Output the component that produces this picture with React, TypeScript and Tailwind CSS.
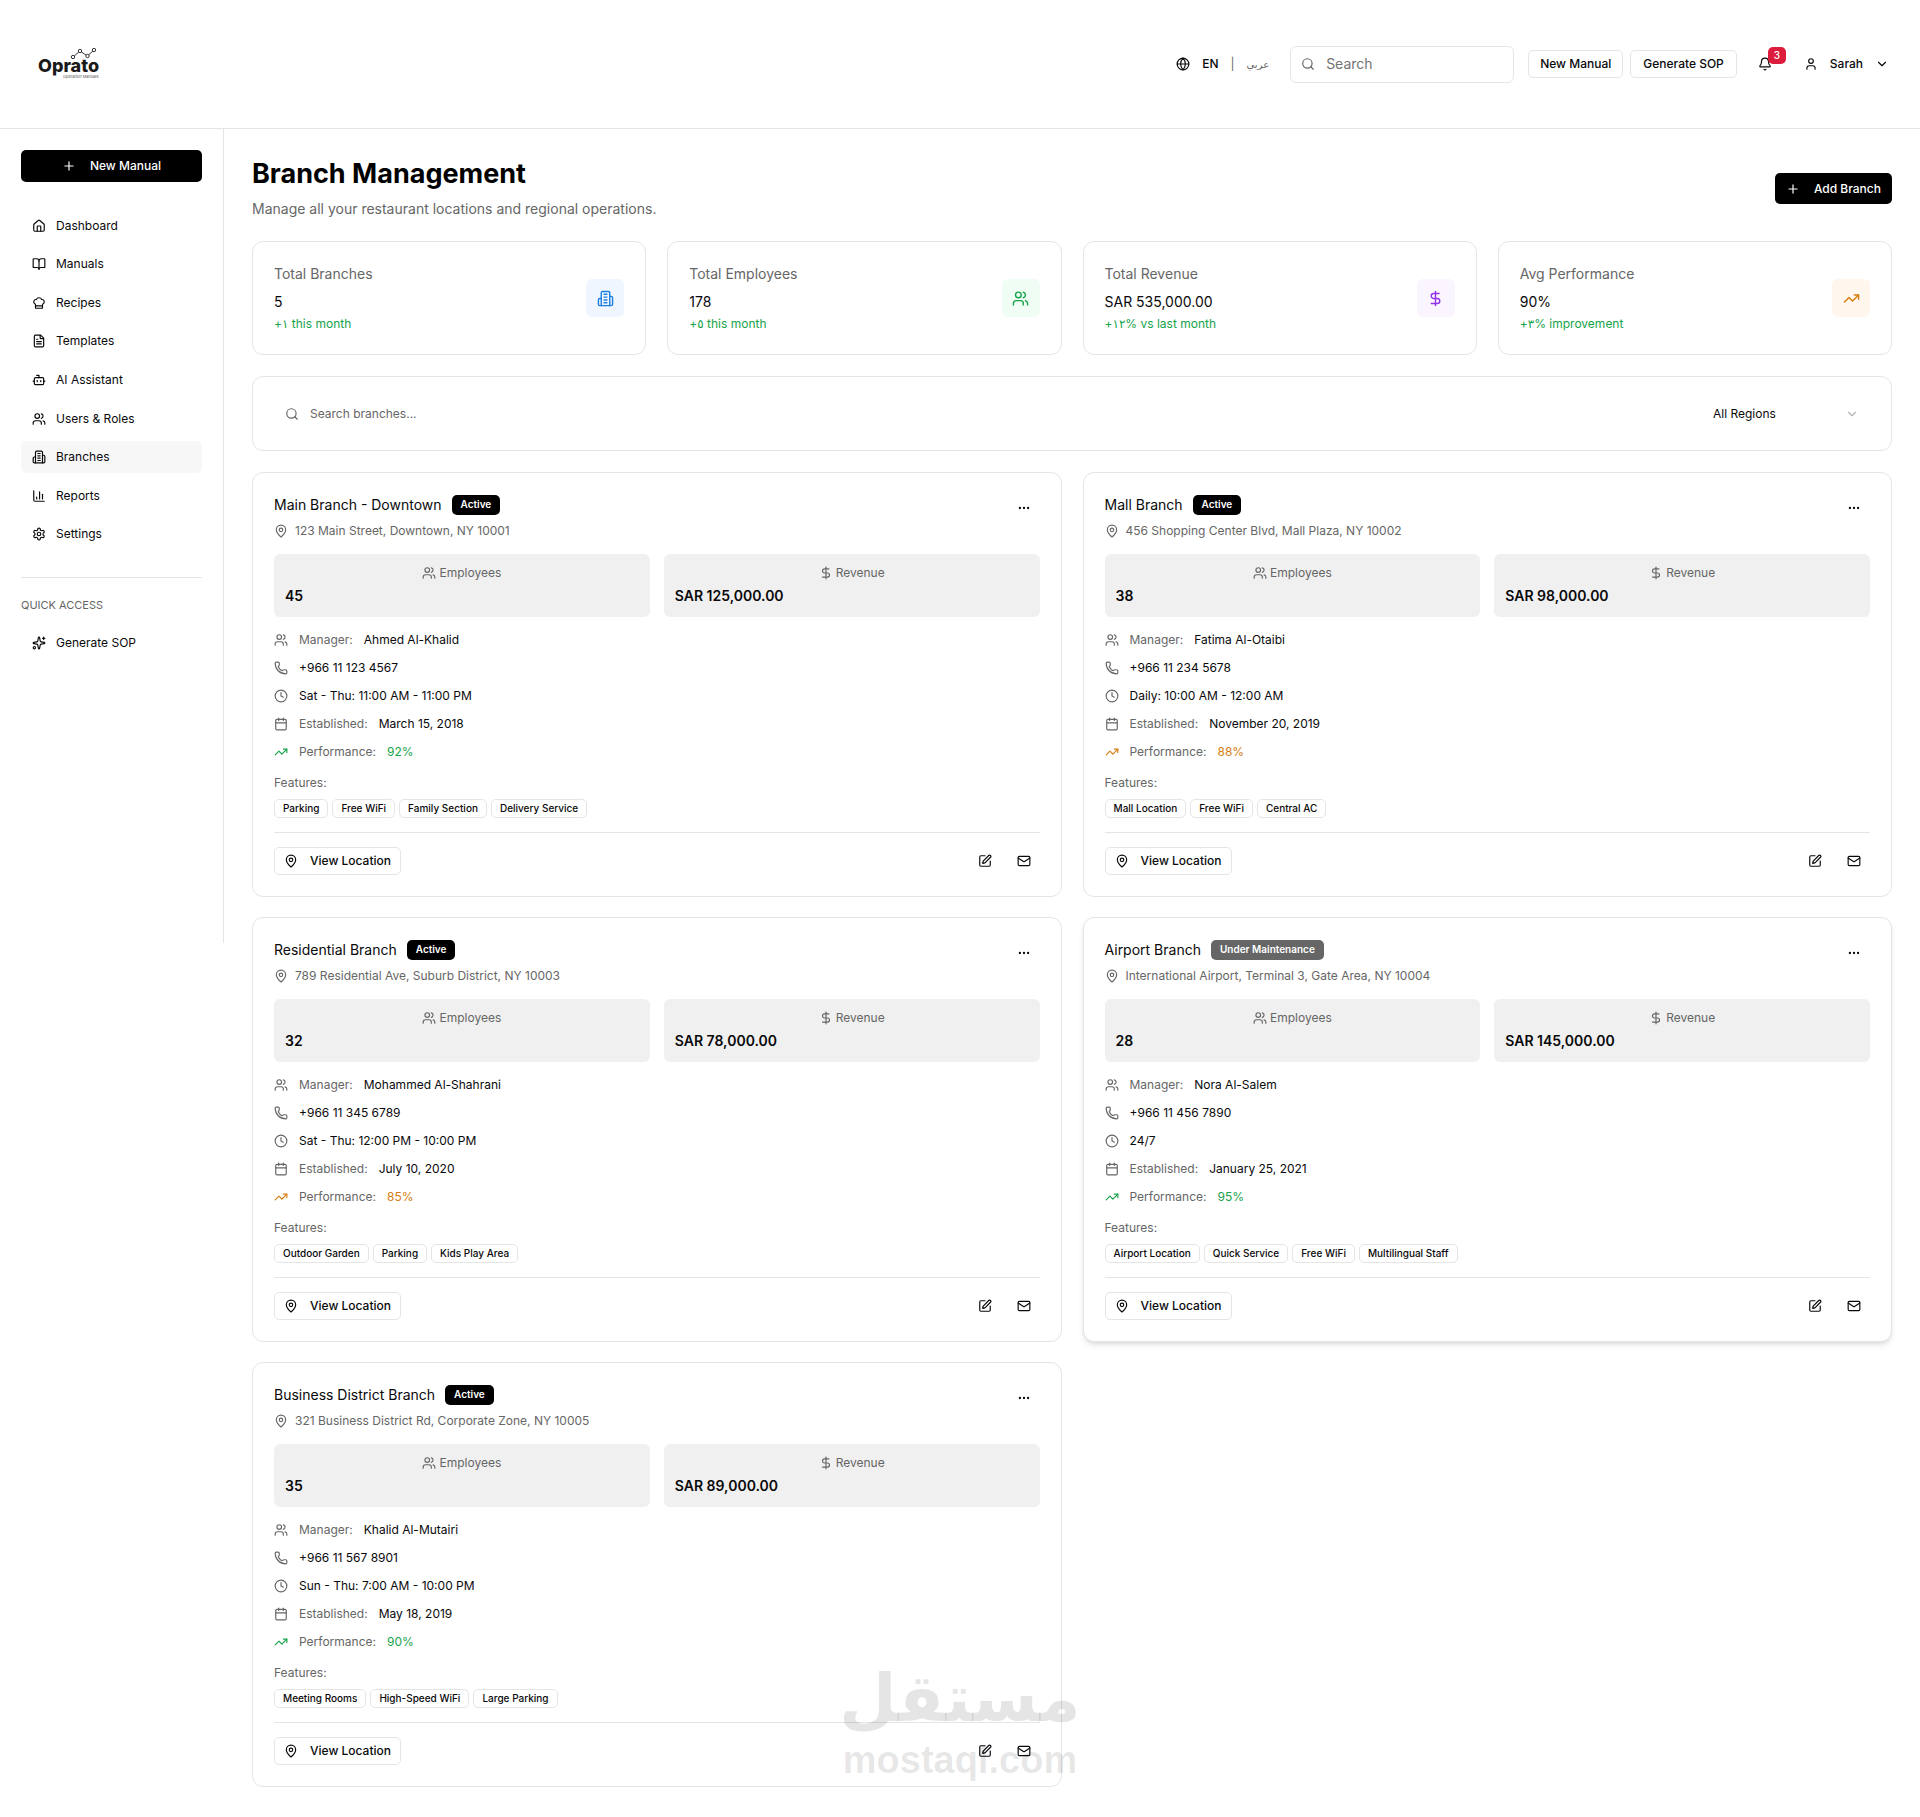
import type { ReactNode } from "react";
import {
  Bell,
  BookOpen,
  Bot,
  Calendar,
  ChartColumn,
  ChefHat,
  ChevronDown,
  Clock,
  DollarSign,
  Ellipsis,
  FileText,
  Globe,
  House,
  Mail,
  MapPin,
  Phone,
  Plus,
  Search,
  Sparkles,
  SquarePen,
  TrendingUp,
  User,
  Users,
} from "lucide-react";
import { clsx } from "clsx";

type IconProps = { size?: number };

function Building({ size = 24 }: IconProps) {
  return (
    <svg
      width={size}
      height={size}
      viewBox="0 0 24 24"
      fill="none"
      stroke="currentColor"
      strokeWidth="2"
      strokeLinecap="round"
      strokeLinejoin="round"
      aria-hidden="true"
    >
      <path d="M6 22V4a2 2 0 0 1 2-2h8a2 2 0 0 1 2 2v18Z" />
      <path d="M6 12H4a2 2 0 0 0-2 2v6a2 2 0 0 0 2 2h2" />
      <path d="M18 9h2a2 2 0 0 1 2 2v9a2 2 0 0 1-2 2h-2" />
      <path d="M10 6h4M10 10h4M10 14h4M10 18h4" />
    </svg>
  );
}

function Gear({ size = 24 }: IconProps) {
  return (
    <svg
      width={size}
      height={size}
      viewBox="0 0 24 24"
      fill="none"
      stroke="currentColor"
      strokeWidth="2"
      strokeLinecap="round"
      strokeLinejoin="round"
      aria-hidden="true"
    >
      <path d="M12.22 2h-.44a2 2 0 0 0-2 2v.18a2 2 0 0 1-1 1.73l-.43.25a2 2 0 0 1-2 0l-.15-.08a2 2 0 0 0-2.73.73l-.22.38a2 2 0 0 0 .73 2.73l.15.1a2 2 0 0 1 1 1.72v.51a2 2 0 0 1-1 1.74l-.15.09a2 2 0 0 0-.73 2.73l.22.38a2 2 0 0 0 2.73.73l.15-.08a2 2 0 0 1 2 0l.43.25a2 2 0 0 1 1 1.73V20a2 2 0 0 0 2 2h.44a2 2 0 0 0 2-2v-.18a2 2 0 0 1 1-1.73l.43-.25a2 2 0 0 1 2 0l.15.08a2 2 0 0 0 2.73-.73l.22-.39a2 2 0 0 0-.73-2.73l-.15-.08a2 2 0 0 1-1-1.74v-.5a2 2 0 0 1 1-1.74l.15-.09a2 2 0 0 0 .73-2.73l-.22-.38a2 2 0 0 0-2.73-.73l-.15.08a2 2 0 0 1-2 0l-.43-.25a2 2 0 0 1-1-1.73V4a2 2 0 0 0-2-2z" />
      <circle cx="12" cy="12" r="3" />
    </svg>
  );
}

const navigation = [
  { name: "Dashboard", icon: House },
  { name: "Manuals", icon: BookOpen },
  { name: "Recipes", icon: ChefHat },
  { name: "Templates", icon: FileText },
  { name: "AI Assistant", icon: Bot },
  { name: "Users & Roles", icon: Users },
  { name: "Branches", icon: Building, active: true },
  { name: "Reports", icon: ChartColumn },
  { name: "Settings", icon: Gear },
];

const stats = [
  {
    label: "Total Branches",
    value: "5",
    trend: "+١ this month",
    icon: Building,
    tone: "bg-blue-50 text-[#1d7fe0]",
  },
  {
    label: "Total Employees",
    value: "178",
    trend: "+٥ this month",
    icon: Users,
    tone: "bg-green-50 text-[#16a34a]",
  },
  {
    label: "Total Revenue",
    value: "SAR 535,000.00",
    trend: "+١٢% vs last month",
    icon: DollarSign,
    tone: "bg-purple-50 text-[#9333ea]",
  },
  {
    label: "Avg Performance",
    value: "90%",
    trend: "+٣% improvement",
    icon: TrendingUp,
    tone: "bg-orange-50 text-[#d67d0f]",
  },
];

type Branch = {
  name: string;
  status: "Active" | "Under Maintenance";
  address: string;
  employees: number;
  revenue: string;
  manager: string;
  phone: string;
  hours: string;
  established: string;
  performance: number;
  features: string[];
  raised?: boolean;
};

const branches: Branch[] = [
  {
    name: "Main Branch - Downtown",
    status: "Active",
    address: "123 Main Street, Downtown, NY 10001",
    employees: 45,
    revenue: "SAR 125,000.00",
    manager: "Ahmed Al-Khalid",
    phone: "+966 11 123 4567",
    hours: "Sat - Thu: 11:00 AM - 11:00 PM",
    established: "March 15, 2018",
    performance: 92,
    features: ["Parking", "Free WiFi", "Family Section", "Delivery Service"],
  },
  {
    name: "Mall Branch",
    status: "Active",
    address: "456 Shopping Center Blvd, Mall Plaza, NY 10002",
    employees: 38,
    revenue: "SAR 98,000.00",
    manager: "Fatima Al-Otaibi",
    phone: "+966 11 234 5678",
    hours: "Daily: 10:00 AM - 12:00 AM",
    established: "November 20, 2019",
    performance: 88,
    features: ["Mall Location", "Free WiFi", "Central AC"],
  },
  {
    name: "Residential Branch",
    status: "Active",
    address: "789 Residential Ave, Suburb District, NY 10003",
    employees: 32,
    revenue: "SAR 78,000.00",
    manager: "Mohammed Al-Shahrani",
    phone: "+966 11 345 6789",
    hours: "Sat - Thu: 12:00 PM - 10:00 PM",
    established: "July 10, 2020",
    performance: 85,
    features: ["Outdoor Garden", "Parking", "Kids Play Area"],
  },
  {
    name: "Airport Branch",
    status: "Under Maintenance",
    address: "International Airport, Terminal 3, Gate Area, NY 10004",
    employees: 28,
    revenue: "SAR 145,000.00",
    manager: "Nora Al-Salem",
    phone: "+966 11 456 7890",
    hours: "24/7",
    established: "January 25, 2021",
    performance: 95,
    features: ["Airport Location", "Quick Service", "Free WiFi", "Multilingual Staff"],
    raised: true,
  },
  {
    name: "Business District Branch",
    status: "Active",
    address: "321 Business District Rd, Corporate Zone, NY 10005",
    employees: 35,
    revenue: "SAR 89,000.00",
    manager: "Khalid Al-Mutairi",
    phone: "+966 11 567 8901",
    hours: "Sun - Thu: 7:00 AM - 10:00 PM",
    established: "May 18, 2019",
    performance: 90,
    features: ["Meeting Rooms", "High-Speed WiFi", "Large Parking"],
  },
];

function Logo() {
  return (
    <svg width="64" height="34" viewBox="0 0 64 34" role="img" aria-label="Oprato">
      <g fill="none" stroke="#333" strokeWidth="1">
        <circle cx="35" cy="10" r="1.7" />
        <circle cx="42" cy="4" r="1.7" />
        <circle cx="49.5" cy="9" r="1.7" />
        <circle cx="56" cy="3" r="1.7" />
        <path d="M36.3 8.9 40.7 5.1M43.4 5l4.7 3.1M50.7 7.8l4.1-3.6" />
      </g>
      <text x="0" y="25" fontFamily="Inter" fontSize="18" fontWeight="800" fill="#1a1a1a">
        Oprato
      </text>
      <text x="25" y="31" fontFamily="Inter" fontSize="4" fill="#555">
        Operation Manuals
      </text>
    </svg>
  );
}

function Header() {
  return (
    <header className="flex h-[129px] items-center justify-between border-b border-[#e5e5e5] pr-5 pl-[38px]">
      <a href="#">
        <Logo />
      </a>

      <div className="flex items-center">
        <div className="flex items-center">
          <Globe size={14} />
          <button className="ml-3 text-xs font-medium">EN</button>
          <span className="mx-3 text-xs text-[#666]">|</span>
          <button className="text-[10px] text-[#666]" lang="ar">
            عربي
          </button>
        </div>

        <label className="ml-[21px] flex h-[37px] w-56 items-center gap-[11px] rounded-md border border-[#e5e5e5] px-[10px]">
          <Search size={14} className="shrink-0 text-[#666]" />
          <input
            type="search"
            aria-label="Search"
            placeholder="Search"
            className="w-full min-w-0 bg-transparent text-sm outline-none placeholder:text-[#737373]"
          />
        </label>

        <button className="ml-[14px] h-7 rounded-[5px] border border-[#e5e5e5] px-[11px] text-xs font-medium">
          New Manual
        </button>
        <button className="ml-[7px] h-7 rounded-[5px] border border-[#e5e5e5] px-3 text-xs font-medium">
          Generate SOP
        </button>

        <button className="relative ml-[14px] flex size-7 items-center justify-center" aria-label="Notifications">
          <Bell size={14} />
          <span className="absolute -top-[3px] left-[17px] flex h-[17px] w-[18px] items-center justify-center rounded-[5px] bg-[#dc1c3c] text-[10px] font-medium text-white">
            3
          </span>
        </button>

        <button className="ml-[14px] flex h-7 items-center gap-3 px-[11px] text-xs font-medium">
          <User size={14} />
          Sarah
          <ChevronDown size={14} />
        </button>
      </div>
    </header>
  );
}

function Sidebar() {
  return (
    <aside className="h-[814px] w-56 shrink-0 border-r border-[#e5e5e5] px-[21px] pt-[21px]">
      <button className="flex h-8 w-full items-center justify-center gap-[14px] rounded-[5px] bg-black text-xs font-medium text-white">
        <Plus size={14} />
        New Manual
      </button>

      <nav className="mt-7 grid h-[340px] auto-rows-fr gap-[7px] text-xs">
        {navigation.map(({ name, icon: Icon, active }) => (
          <a
            key={name}
            href="#"
            className={clsx("flex items-center gap-[10px] rounded-md px-[11px]", active && "bg-[#f7f7f7]")}
          >
            <Icon size={14} />
            {name}
          </a>
        ))}
      </nav>

      <div className="mt-[27px] border-t border-[#e5e5e5] pt-[19px]">
        <h2 className="text-[11px] leading-4 text-[#666]">QUICK ACCESS</h2>
        <a href="#" className="mt-[14px] flex h-8 items-center gap-[10px] px-[11px] text-xs">
          <Sparkles size={14} />
          Generate SOP
        </a>
      </div>
    </aside>
  );
}

function Row({ icon, label, children }: { icon: ReactNode; label?: string; children: ReactNode }) {
  return (
    <li className="flex h-[18px] items-center gap-[11px]">
      <span className="text-[#666]">{icon}</span>
      {label && <span className="text-[#666]">{label}</span>}
      <span>{children}</span>
    </li>
  );
}

function Metric({ icon, label, value }: { icon: ReactNode; label: string; value: ReactNode }) {
  return (
    <div className="rounded-md bg-[#f0f0f0] px-[11px] py-[10px]">
      <div className="flex h-[18px] items-center justify-center gap-[3px] text-xs text-[#666]">
        {icon}
        {label}
      </div>
      <div className="mt-[3px] text-sm leading-[22px] font-semibold">{value}</div>
    </div>
  );
}

function BranchCard({ branch }: { branch: Branch }) {
  const performanceColor = branch.performance >= 90 ? "text-[#16a34a]" : "text-[#d67d0f]";

  return (
    <article
      className={clsx(
        "rounded-[11px] border border-[#e5e5e5] bg-white p-[21px]",
        branch.raised && "shadow-md"
      )}
    >
      <div className="flex items-start justify-between">
        <div>
          <div className="flex h-[21px] items-center gap-[10px]">
            <h3 className="text-sm">{branch.name}</h3>
            <span
              className={clsx(
                "flex h-5 items-center rounded-[5px] px-[9px] text-[10px] font-semibold text-white",
                branch.status === "Active" ? "bg-black" : "bg-[#666]"
              )}
            >
              {branch.status}
            </span>
          </div>
          <p className="mt-[7px] flex h-[18px] items-center gap-[7px] text-xs text-[#666]">
            <MapPin size={14} />
            {branch.address}
          </p>
        </div>
        <button className="flex h-7 w-8 items-center justify-center" aria-label="More options">
          <Ellipsis size={14} />
        </button>
      </div>

      <div className="mt-[14px] grid grid-cols-2 gap-[14px]">
        <Metric icon={<Users size={14} />} label="Employees" value={branch.employees} />
        <Metric icon={<DollarSign size={14} />} label="Revenue" value={branch.revenue} />
      </div>

      <ul className="mt-[14px] flex flex-col gap-[10px] text-xs">
        <Row icon={<Users size={14} />} label="Manager:">
          {branch.manager}
        </Row>
        <Row icon={<Phone size={14} />}>{branch.phone}</Row>
        <Row icon={<Clock size={14} />}>{branch.hours}</Row>
        <Row icon={<Calendar size={14} />} label="Established:">
          {branch.established}
        </Row>
        <Row icon={<TrendingUp size={14} className={performanceColor} />} label="Performance:">
          <span className={performanceColor}>{branch.performance}%</span>
        </Row>
      </ul>

      <p className="mt-[13px] text-xs leading-[18px] text-[#666]">Features:</p>
      <ul className="mt-[7px] flex flex-wrap gap-1">
        {branch.features.map((feature) => (
          <li
            key={feature}
            className="flex h-[19px] items-center rounded-[5px] border border-[#e5e5e5] px-2 text-[10px] font-medium"
          >
            {feature}
          </li>
        ))}
      </ul>

      <div className="mt-[14px] flex items-center justify-between border-t border-[#e5e5e5] pt-[14px]">
        <button className="flex h-7 items-center gap-3 rounded-[5px] border border-[#e5e5e5] px-[9px] text-xs font-medium">
          <MapPin size={14} />
          View Location
        </button>
        <div className="flex gap-[7px]">
          <button className="flex h-7 w-8 items-center justify-center" aria-label="Edit branch">
            <SquarePen size={14} />
          </button>
          <button className="flex h-7 w-8 items-center justify-center" aria-label="Email branch">
            <Mail size={14} />
          </button>
        </div>
      </div>
    </article>
  );
}

function Watermark() {
  return (
    <div className="pointer-events-none absolute inset-x-0 bottom-9 flex justify-center text-black/10">
      <svg width="260" height="118" viewBox="0 0 260 118" fill="currentColor" aria-hidden="true">
        <text x="130" y="58" textAnchor="middle" fontFamily="DejaVu Sans" fontSize="66" fontWeight="700">
          مستقل
        </text>
        <text x="130" y="110" textAnchor="middle" fontFamily="Liberation Sans" fontSize="38" fontWeight="700">
          mostaql.com
        </text>
      </svg>
    </div>
  );
}

export default function App() {
  return (
    <div className="relative min-h-screen bg-white font-['Inter','DejaVu_Sans',sans-serif] text-[#09090b]">
      <Header />

      <div className="flex items-start">
        <Sidebar />

        <main className="flex min-w-0 flex-1 flex-col gap-[21px] p-7">
          <div className="flex items-center justify-between">
            <div>
              <h1 className="text-[27px] leading-[33px] font-bold text-black">Branch Management</h1>
              <p className="mt-2 text-sm leading-[22px] text-[#666]">
                Manage all your restaurant locations and regional operations.
              </p>
            </div>
            <button className="flex h-[31px] items-center gap-[14px] rounded-[5px] bg-black px-[11px] text-xs font-medium text-white">
              <Plus size={14} />
              Add Branch
            </button>
          </div>

          {/* Stats */}
          <div className="grid grid-cols-4 gap-[21px]">
            {stats.map(({ label, value, trend, icon: Icon, tone }) => (
              <div
                key={label}
                className="flex items-center justify-between rounded-[11px] border border-[#e5e5e5] p-[21px]"
              >
                <div>
                  <p className="text-sm leading-[21px] text-[#666]">{label}</p>
                  <p className="mt-[7px] text-sm leading-[21px]">{value}</p>
                  <p className="mt-[3px] h-[18px] text-xs leading-[18px] text-[#16a34a]">{trend}</p>
                </div>
                <div className={clsx("flex size-[38px] items-center justify-center rounded-md", tone)}>
                  <Icon size={17} />
                </div>
              </div>
            ))}
          </div>

          {/* Filters */}
          <div className="flex items-center justify-between rounded-[11px] border border-[#e5e5e5] p-[21px]">
            <label className="flex h-[31px] flex-1 items-center gap-[11px] px-[11px]">
              <Search size={14} className="shrink-0 text-[#666]" />
              <input
                type="search"
                aria-label="Search branches"
                placeholder="Search branches..."
                className="w-full bg-transparent text-xs outline-none placeholder:text-[#666]"
              />
            </label>
            <div className="relative flex w-[168px] items-center">
              <select
                aria-label="Region"
                className="h-[31px] w-full appearance-none bg-transparent px-[11px] text-xs outline-none"
              >
                <option>All Regions</option>
              </select>
              <ChevronDown size={14} className="pointer-events-none absolute right-[11px] text-[#b3b3b3]" />
            </div>
          </div>

          <div className="grid grid-cols-2 gap-x-[21px] gap-y-5">
            {branches.map((branch) => (
              <BranchCard key={branch.name} branch={branch} />
            ))}
          </div>
        </main>
      </div>

      <Watermark />
    </div>
  );
}
